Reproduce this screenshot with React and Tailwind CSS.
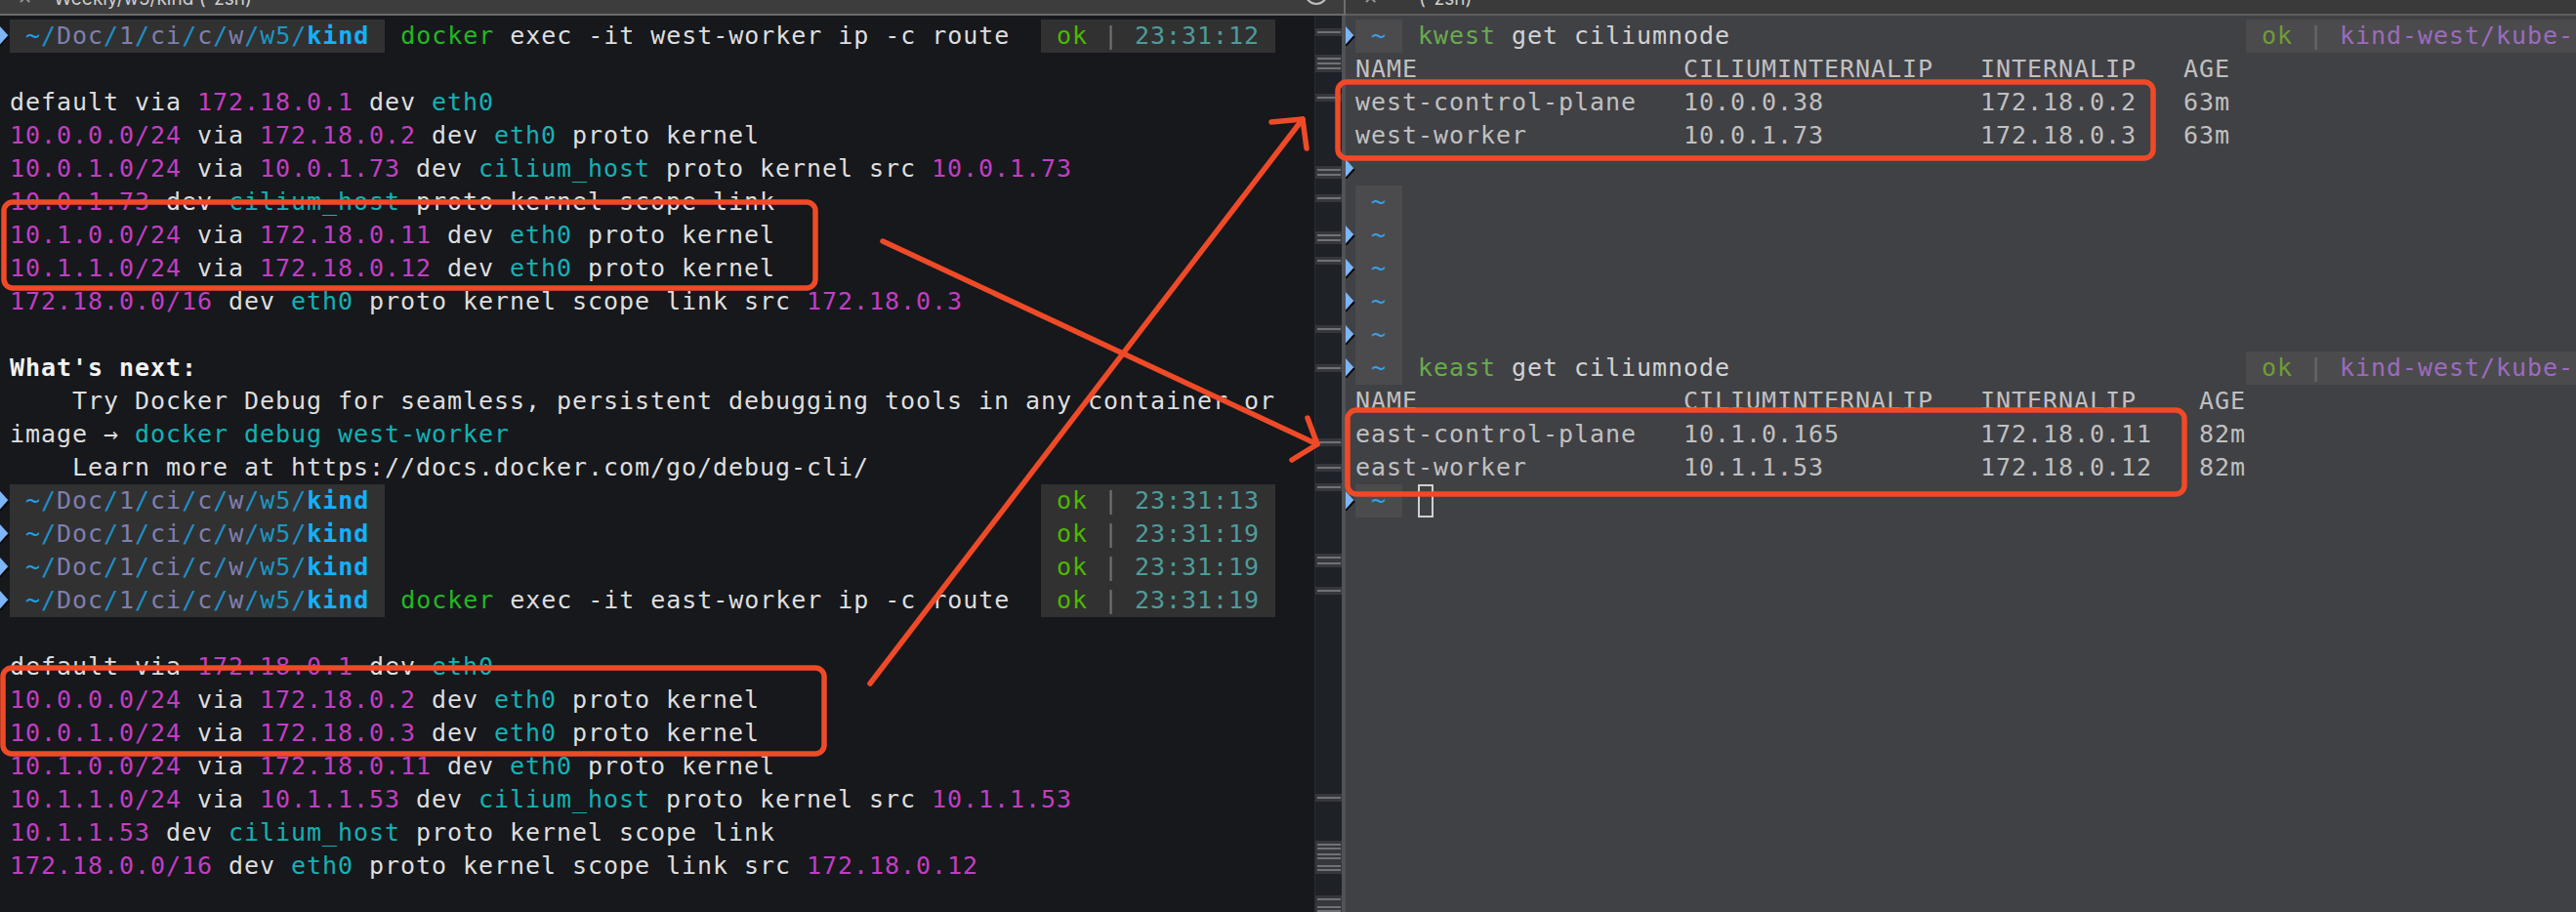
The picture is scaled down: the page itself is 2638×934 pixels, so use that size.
import React from "react";

function Arrow() {
  return (
    <svg width="10" height="20" viewBox="0 0 10 20" className="block">
      <polygon points="0,0 9,10 0,20" fill="#7db5f6" />
      <polyline points="9,10 0,20" fill="none" stroke="#050505" strokeWidth="2" />
    </svg>
  );
}

const W = ({ children }) => <span className="text-[#dedede]">{children}</span>;
const M = ({ children }) => <span className="text-[#c23ec2]">{children}</span>;
const C = ({ children }) => <span className="text-[#14b1b4]">{children}</span>;
const S = () => <span className="text-[#1f8fc6]">/</span>;
const G = ({ children }) => <span className="text-[#7f7fae]">{children}</span>;

function LeftPrompt() {
  return (
    <span className="inline-block h-[34px] bg-[#313131] align-top">
      {" "}
      <span className="text-[#1ea3ea]">~</span>
      <S />
      <G>Doc</G>
      <S />
      <G>1</G>
      <S />
      <G>ci</G>
      <S />
      <G>c</G>
      <S />
      <G>w</G>
      <S />
      <span className="text-[#1c97c2]">w5</span>
      <S />
      <span className="font-bold text-[#14b0fa]">kind</span>
      {" "}
    </span>
  );
}

function Status({ time }) {
  return (
    <span className="inline-block h-[34px] bg-[#313131] align-top whitespace-pre">
      {" "}
      <span className="text-[#4cb802]">ok</span>
      {" "}
      <span className="text-[#6f6f6f]">|</span>
      {" "}
      <span className="text-[#4f9b9b]">{time}</span>
      {" "}
    </span>
  );
}

function L({ arrow, children, status }) {
  return (
    <div className="flex h-[34px]">
      <div className="flex w-[10px] shrink-0 items-center">{arrow ? <Arrow /> : null}</div>
      <div className="flex w-[1296px] shrink-0 justify-between">
        <div className="whitespace-pre">{children}</div>
        {status}
      </div>
    </div>
  );
}

function RightBlock() {
  return (
    <span className="inline-block h-[34px] bg-[#4b4b4d] align-top whitespace-pre">
      {" "}
      <span className="text-[#3ba0e6]">~</span>
      {" "}
    </span>
  );
}

function RStatus() {
  return (
    <div className="h-[34px] flex-1 whitespace-pre bg-[#4b4b4d]">
      {" "}
      <span className="text-[#6f9d32]">ok</span>
      {" "}
      <span className="text-[#686868]">|</span>
      {" "}
      <span className="text-[#9b6bbd]">kind-west/kube-system</span>
    </div>
  );
}

function R({ arrow, children, status }) {
  return (
    <div className="flex h-[34px]">
      <div className="flex w-[10px] shrink-0 items-center">{arrow ? <Arrow /> : null}</div>
      <div className={status ? "w-[912px] shrink-0 whitespace-pre" : "whitespace-pre"}>{children}</div>
      {status ? <RStatus /> : null}
    </div>
  );
}

const row = (a, b, c, d, wc) =>
  a.padEnd(21) + b.padEnd(19) + c.padEnd(wc) + d;

const TICKS = [
  [33], [60, 65, 70], [100], [174, 179], [203], [241, 246], [267], [337], [377],
  [453], [479], [499], [571, 577], [605], [817], [865, 869, 875, 879], [887, 891],
  [921], [929, 933],
];

export default function App() {
  return (
    <div className="relative flex h-[934px] w-[2638px] flex-col overflow-hidden bg-[#16181c] font-['DejaVu_Sans_Mono',monospace] text-[25px] leading-[34px] tracking-[0.95px] text-[#dedede]">
      {/* title bar */}
      <div className="flex h-[16px] shrink-0 font-['Inter',sans-serif] tracking-normal">
        <div className="flex w-[1376px] shrink-0 overflow-hidden border-b-2 border-[#6a6a6a] bg-[#3d3d3d]">
          <span className="ml-[18px] mt-[-14px] text-[18px] leading-[24px] text-[#9a9a9a]">✕</span>
          <span className="ml-[22px] mt-[-13px] text-[19px] leading-[24px] text-[#cfcfcf]">Weekly/w5/kind (-zsh)</span>
          <div className="ml-auto mr-[16px] mt-[-19px] h-[24px] w-[24px] shrink-0 rounded-full border-2 border-[#bdbdbd]" />
        </div>
        <div className="w-[2px] shrink-0 bg-[#6d6d6d]" />
        <div className="flex flex-1 overflow-hidden border-b-2 border-[#5c5c5c] bg-[#3a3a3a]">
          <span className="ml-[18px] mt-[-14px] text-[18px] leading-[24px] text-[#9a9a9a]">✕</span>
          <span className="ml-[42px] mt-[-13px] text-[19px] leading-[24px] text-[#cfcfcf]">(-zsh)</span>
        </div>
      </div>

      <div className="flex flex-1">
        {/* left terminal */}
        <div className="w-[1346px] shrink-0 overflow-hidden bg-[#16181c] pt-[4px]">
          <L arrow status={<Status time="23:31:12" />}>
            <LeftPrompt />
            {" "}
            <span className="text-[#21b821]">docker</span>
            <W> exec -it west-worker ip -c route</W>
          </L>
          <L />
          <L>
            <W>default via </W><M>172.18.0.1</M><W> dev </W><C>eth0</C>
          </L>
          <L>
            <M>10.0.0.0/24</M><W> via </W><M>172.18.0.2</M><W> dev </W><C>eth0</C><W> proto kernel</W>
          </L>
          <L>
            <M>10.0.1.0/24</M><W> via </W><M>10.0.1.73</M><W> dev </W><C>cilium_host</C><W> proto kernel src </W><M>10.0.1.73</M>
          </L>
          <L>
            <M>10.0.1.73</M><W> dev </W><C>cilium_host</C><W> proto kernel scope link</W>
          </L>
          <L>
            <M>10.1.0.0/24</M><W> via </W><M>172.18.0.11</M><W> dev </W><C>eth0</C><W> proto kernel</W>
          </L>
          <L>
            <M>10.1.1.0/24</M><W> via </W><M>172.18.0.12</M><W> dev </W><C>eth0</C><W> proto kernel</W>
          </L>
          <L>
            <M>172.18.0.0/16</M><W> dev </W><C>eth0</C><W> proto kernel scope link src </W><M>172.18.0.3</M>
          </L>
          <L />
          <L>
            <span className="font-bold text-[#f2f2f2]">What's next:</span>
          </L>
          <L>
            <W>    Try Docker Debug for seamless, persistent debugging tools in any container or</W>
          </L>
          <L>
            <W>image → </W><C>docker debug west-worker</C>
          </L>
          <L>
            <W>    Learn more at https://docs.docker.com/go/debug-cli/</W>
          </L>
          <L arrow status={<Status time="23:31:13" />}>
            <LeftPrompt />
          </L>
          <L arrow status={<Status time="23:31:19" />}>
            <LeftPrompt />
          </L>
          <L arrow status={<Status time="23:31:19" />}>
            <LeftPrompt />
          </L>
          <L arrow status={<Status time="23:31:19" />}>
            <LeftPrompt />
            {" "}
            <span className="text-[#21b821]">docker</span>
            <W> exec -it east-worker ip -c route</W>
          </L>
          <L />
          <L>
            <W>default via </W><M>172.18.0.1</M><W> dev </W><C>eth0</C>
          </L>
          <L>
            <M>10.0.0.0/24</M><W> via </W><M>172.18.0.2</M><W> dev </W><C>eth0</C><W> proto kernel</W>
          </L>
          <L>
            <M>10.0.1.0/24</M><W> via </W><M>172.18.0.3</M><W> dev </W><C>eth0</C><W> proto kernel</W>
          </L>
          <L>
            <M>10.1.0.0/24</M><W> via </W><M>172.18.0.11</M><W> dev </W><C>eth0</C><W> proto kernel</W>
          </L>
          <L>
            <M>10.1.1.0/24</M><W> via </W><M>10.1.1.53</M><W> dev </W><C>cilium_host</C><W> proto kernel src </W><M>10.1.1.53</M>
          </L>
          <L>
            <M>10.1.1.53</M><W> dev </W><C>cilium_host</C><W> proto kernel scope link</W>
          </L>
          <L>
            <M>172.18.0.0/16</M><W> dev </W><C>eth0</C><W> proto kernel scope link src </W><M>172.18.0.12</M>
          </L>
        </div>

        {/* minimap strip */}
        <div className="w-[28px] shrink-0 border-l border-[#2a2c33] bg-[#1f2129]">
          <svg width="27" height="918" viewBox="0 16 27 918" className="block">
            {TICKS.map((g, i) => (
              <g key={i}>
                <rect x="0" y={g[0] - 4} width="27" height={g[g.length - 1] - g[0] + 8} fill="#35373c" />
                {g.map((y) => (
                  <rect key={y} x="2" y={y - 1} width="24" height="2" fill="#707176" />
                ))}
              </g>
            ))}
          </svg>
        </div>
        <div className="w-[4px] shrink-0 bg-[#515256]" />

        {/* right terminal */}
        <div className="flex-1 overflow-hidden bg-[#404145] pt-[4px] text-[#c0c0c0]">
          <R arrow status>
            <RightBlock />
            {" "}
            <span className="text-[#6aaa4c]">kwest</span>
            <span className="text-[#d2d2d2]"> get ciliumnode</span>
          </R>
          <R>{row("NAME", "CILIUMINTERNALIP", "INTERNALIP", "AGE", 13)}</R>
          <R>{row("west-control-plane", "10.0.0.38", "172.18.0.2", "63m", 13)}</R>
          <R>{row("west-worker", "10.0.1.73", "172.18.0.3", "63m", 13)}</R>
          <R arrow />
          <R>
            <RightBlock />
          </R>
          <R arrow>
            <RightBlock />
          </R>
          <R arrow>
            <RightBlock />
          </R>
          <R arrow>
            <RightBlock />
          </R>
          <R arrow>
            <RightBlock />
          </R>
          <R arrow status>
            <RightBlock />
            {" "}
            <span className="text-[#6aaa4c]">keast</span>
            <span className="text-[#d2d2d2]"> get ciliumnode</span>
          </R>
          <R>{row("NAME", "CILIUMINTERNALIP", "INTERNALIP", "AGE", 14)}</R>
          <R>{row("east-control-plane", "10.1.0.165", "172.18.0.11", "82m", 14)}</R>
          <R>{row("east-worker", "10.1.1.53", "172.18.0.12", "82m", 14)}</R>
          <R arrow>
            <RightBlock />
            {" "}
            <span className="inline-block h-[34px] w-[16px] border-2 border-[#cfcfcf] align-top" />
          </R>
        </div>
      </div>

      {/* red annotations */}
      <svg
        className="pointer-events-none absolute left-0 top-0"
        width="2638"
        height="934"
        viewBox="0 0 2638 934"
      >
        <g fill="none" stroke="#ef4a27" strokeWidth="5.5" strokeLinecap="round" strokeLinejoin="round">
          <rect x="4" y="207" width="831" height="88" rx="9" />
          <rect x="3" y="684" width="841" height="88" rx="9" />
          <rect x="1370" y="84" width="835" height="78" rx="9" />
          <rect x="1380" y="420" width="857" height="86" rx="9" />
          <path d="M904 247 L1349 455" />
          <path d="M1339 428 L1349 455 L1323 471" />
          <path d="M891 700 L1334 122" />
          <path d="M1302 125 L1334 122 L1338 152" />
        </g>
      </svg>
    </div>
  );
}
